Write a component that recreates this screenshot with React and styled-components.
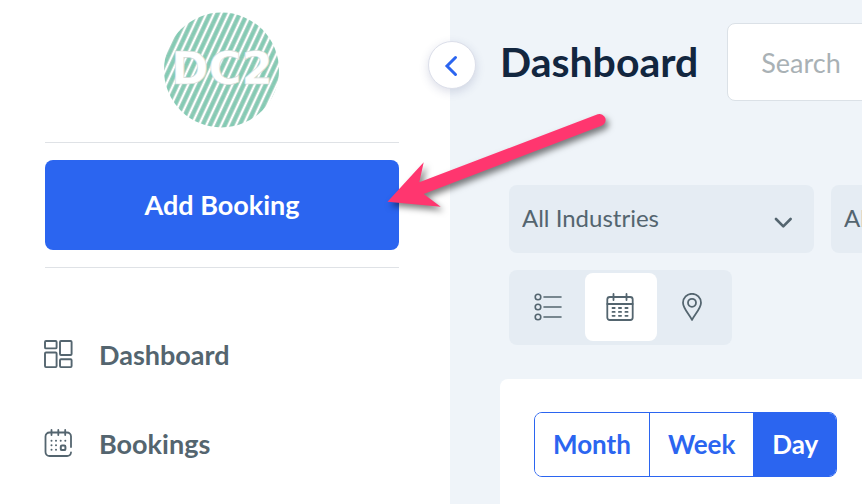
import styled, { createGlobalStyle } from 'styled-components'

const GlobalStyle = createGlobalStyle`
  * {
    box-sizing: border-box;
  }

  body {
    margin: 0;
    background-color: #eff4f9;
    font-family: Lato, "Open Sans", sans-serif;
    color: #54656f;
  }

  button, input, select {
    font-family: inherit;
    margin: 0;
  }
`;

const Container = styled.div`
  position: relative;
  display: flex;
  min-height: 100vh;
  overflow: hidden;
`;

const Sidebar = styled.aside`
  position: relative;
  flex: none;
  width: 450px;
  padding: 12px 51px 0 45px;
  background-color: white;
`;

const LogoLink = styled.a`
  display: flex;
  justify-content: center;
  padding-bottom: 14px;
`;

const LogoText = styled.text`
  font-family: "DejaVu Sans", sans-serif;
  font-size: 45px;
  font-weight: 700;
`;

const AddArea = styled.div`
  padding: 17px 0;
  border-top: 1px solid #dfe2e6;
  border-bottom: 1px solid #dfe2e6;
`;

const AddButton = styled.button`
  display: block;
  width: 100%;
  height: 90px;
  padding: 0 0 2px;
  border: none;
  border-radius: 8px;
  background-color: #2b65f0;
  color: white;
  font-size: 27px;
  font-weight: 700;
  cursor: pointer;
`;

const CollapseButton = styled.button`
  position: absolute;
  top: 41px;
  right: -26px;
  z-index: 1;
  display: flex;
  align-items: center;
  justify-content: center;
  width: 48px;
  height: 48px;
  padding: 2px 2px 0 0;
  border: 1px solid #dcdfea;
  border-radius: 50%;
  background-color: white;
  box-shadow: 0 3px 10px rgba(60, 70, 130, 0.18);
  cursor: pointer;
`;

const Nav = styled.nav`
  display: flex;
  flex-direction: column;
  gap: 49px;
  padding-top: 67px;
`;

const NavLink = styled.a`
  display: flex;
  align-items: center;
  gap: 25px;
  color: #54656f;
  font-size: 27px;
  line-height: 40px;
  font-weight: 700;
  text-decoration: none;
`;

const Main = styled.main`
  flex: 1;
  min-width: 0;
  display: flex;
  flex-direction: column;
  padding: 23px 0 0 50px;
  overflow: hidden;
`;

const Header = styled.header`
  display: flex;
  align-items: center;
  gap: 29px;
`;

const Title = styled.h1`
  margin: 0;
  color: #12263f;
  font-size: 41px;
  line-height: 48px;
  font-weight: 700;
`;

const SearchInput = styled.input`
  flex: 1 0 300px;
  height: 78px;
  padding: 0 33px;
  border: 1px solid #dbe1e7;
  border-radius: 8px;
  background-color: white;
  font-size: 27px;

  &::placeholder {
    color: #a9b1b5;
    opacity: 1;
  }
`;

const Filters = styled.div`
  display: flex;
  gap: 17px;
  padding: 84px 0 17px 9px;
`;

const SelectBox = styled.div`
  position: relative;
  flex: none;
`;

const Select = styled.select`
  appearance: none;
  width: 305px;
  height: 68px;
  padding: 0 60px 4px 13px;
  border: none;
  border-radius: 8px;
  background-color: #e5ecf3;
  color: #54656f;
  font-size: 24px;
`;

const SelectArrow = styled.svg`
  position: absolute;
  top: 32px;
  right: 22px;
  pointer-events: none;
`;

const Views = styled.div`
  display: flex;
  align-self: flex-start;
  margin-left: 9px;
  padding: 3px 3px 4px 4px;
  border-radius: 8px;
  background-color: #e5ecf3;
`;

const ViewButton = styled.button`
  display: flex;
  align-items: center;
  justify-content: center;
  width: 72px;
  height: 68px;
  padding: 0 2px 0 0;
  border: none;
  border-radius: 8px;
  background-color: ${props => props.$active ? "white" : "transparent"};
  color: #54656f;
  cursor: pointer;
`;

const Card = styled.section`
  flex: 1;
  margin-top: 34px;
  padding: 33px 34px;
  border-top-left-radius: 8px;
  background-color: white;
`;

const Periods = styled.div`
  display: inline-flex;
  border: 1px solid #2b65f0;
  border-radius: 8px;
  overflow: hidden;
`;

const PeriodButton = styled.button`
  height: 63px;
  padding: 0 18px 2px;
  border: none;
  background-color: ${props => props.$active ? "#2b65f0" : "white"};
  color: ${props => props.$active ? "white" : "#2b65f0"};
  font-size: 26px;
  font-weight: 700;
  cursor: pointer;

  & + & {
    border-left: 1px solid #2b65f0;
  }
`;

const Pointer = styled.svg`
  position: absolute;
  top: 100px;
  left: 380px;
  z-index: 2;
  pointer-events: none;
  filter: drop-shadow(3px 4px 3px rgba(0, 0, 0, 0.5));
`;

const Logo = () => (
    <svg width="116" height="116" viewBox="0 0 116 116" role="img" aria-label="DC2">
        <defs>
            <pattern id="stripes" width="6.7" height="10" patternUnits="userSpaceOnUse" patternTransform="rotate(25)">
                <rect x="0.2" width="4.3" height="10" fill="#84cbb4" stroke="#b9c4bf" strokeWidth="0.3"/>
            </pattern>
        </defs>
        <circle cx="57.500" cy="58" r="57.5" fill="url(#stripes)"/>
        <LogoText x="58" y="72" textAnchor="middle" fill="white" stroke="#d5dbd8" strokeWidth="0.6">DC2</LogoText>
    </svg>
)

const DashboardIcon = () => (
    <svg width="29" height="29" viewBox="1 1 29 29" fill="none" stroke="currentColor" strokeWidth="1.9" overflow="visible">
        <rect x="1" y="1" width="11.6" height="7.4" rx="1"/>
        <rect x="16" y="1" width="11.6" height="14" rx="1"/>
        <rect x="1" y="12.5" width="11.6" height="14.6" rx="1"/>
        <rect x="16" y="19.2" width="11.6" height="7.9" rx="1"/>
    </svg>
)

const BookingsIcon = () => (
    <svg width="29" height="29" viewBox="1 1 29 29" fill="none" stroke="currentColor" strokeWidth="1.8" strokeLinecap="round" overflow="visible">
        <path d="M27 18V7.5a4 4 0 0 0-4-4H5.5a4 4 0 0 0-4 4V23a4 4 0 0 0 4 4H23a4 4 0 0 0 4-3.5"/>
        <path d="M7.5 1v5M14.3 1v5M21.2 1v5"/>
        <path strokeWidth="2" d="M7.5 11.7h.01M12 11.7h.01M16.7 11.7h.01M21.3 11.7h.01M7.5 16.2h.01M12 16.2h.01M7.5 20.8h.01M12 20.8h.01"/>
        <rect x="16.8" y="16.5" width="4.6" height="4.6" rx="1.2" strokeWidth="2"/>
    </svg>
)

const ListIcon = () => (
    <svg width="28" height="28" viewBox="0 0 28 28" fill="none" stroke="currentColor" strokeWidth="1.6" strokeLinecap="round">
        <circle cx="4" cy="4" r="2.8"/>
        <circle cx="4" cy="14" r="2.8"/>
        <circle cx="4" cy="24" r="2.8"/>
        <path d="M10 4h17M10 14h17M10 24h17"/>
    </svg>
)

const CalendarIcon = () => (
    <svg width="28" height="28" viewBox="0 0 28 28" fill="none" stroke="currentColor" strokeWidth="1.8" strokeLinecap="round">
        <rect x="1.3" y="4" width="25.4" height="23" rx="2.5"/>
        <path d="M1.3 11h25.4M7.5 1v6M20.5 1v6"/>
        <path d="M6.5 15h2.2M12.9 15h2.2M19.4 15h2.2M6.5 18.9h2.2M12.9 18.9h2.2M19.4 18.9h2.2M6.5 22.8h2.2M12.9 22.8h2.2M19.4 22.8h2.2"/>
    </svg>
)

const PinIcon = () => (
    <svg width="28" height="28" viewBox="0 0 28 28" fill="none" stroke="currentColor" strokeWidth="1.8" strokeLinejoin="round">
        <path d="M14 27C11.5 21.5 5 15.5 5 9.8a9 9 0 0 1 18 0C23 15.5 16.5 21.5 14 27z"/>
        <circle cx="14" cy="9.8" r="4"/>
    </svg>
)

const Filter = ({ label, option }) => (
    <SelectBox>
        <Select aria-label={label}>
            <option>{option}</option>
        </Select>
        <SelectArrow width="18" height="12" viewBox="0 0 18 12" fill="none" stroke="#54656f" strokeWidth="2.6" strokeLinecap="round" strokeLinejoin="round">
            <path d="M2 2l7.3 7.3L16.600 2"/>
        </SelectArrow>
    </SelectBox>
)

const App = () => {
    return (
        <Container>
            <GlobalStyle/>
            <Sidebar>
                <LogoLink href="#">
                    <Logo/>
                </LogoLink>
                <AddArea>
                    <AddButton>Add Booking</AddButton>
                </AddArea>
                <Nav>
                    <NavLink href="#dashboard"><DashboardIcon/>Dashboard</NavLink>
                    <NavLink href="#bookings"><BookingsIcon/>Bookings</NavLink>
                </Nav>
                <CollapseButton aria-label="Collapse menu">
                    <svg width="14" height="22" viewBox="0 0 14 22" fill="none" stroke="#2b65f0" strokeWidth="3" strokeLinecap="round">
                        <path d="M11.5 2.500L3 11l8.5 8.500"/>
                    </svg>
                </CollapseButton>
            </Sidebar>
            <Main>
                <Header>
                    <Title>Dashboard</Title>
                    <SearchInput type="search" aria-label="Search" placeholder="Search"/>
                </Header>
                <Filters>
                    <Filter label="Industry" option="All Industries"/>
                    <Filter label="Service" option="All Services"/>
                </Filters>
                <Views>
                    <ViewButton aria-label="List"><ListIcon/></ViewButton>
                    <ViewButton aria-label="Calendar" $active><CalendarIcon/></ViewButton>
                    <ViewButton aria-label="Map"><PinIcon/></ViewButton>
                </Views>
                <Card>
                    <Periods>
                        <PeriodButton>Month</PeriodButton>
                        <PeriodButton>Week</PeriodButton>
                        <PeriodButton $active>Day</PeriodButton>
                    </Periods>
                </Card>
            </Main>
            <Pointer width="240" height="120" viewBox="0 0 240 120" aria-hidden="true">
                <path fill="#ff366f" d="M7.5 101.7L43.7 62.3 39.3 82.3 217.7 14.3A6 6 0 0 1 221.5 25.7L43.7 94 60.7 106.7z"/>
            </Pointer>
        </Container>
    )
}

export default App
